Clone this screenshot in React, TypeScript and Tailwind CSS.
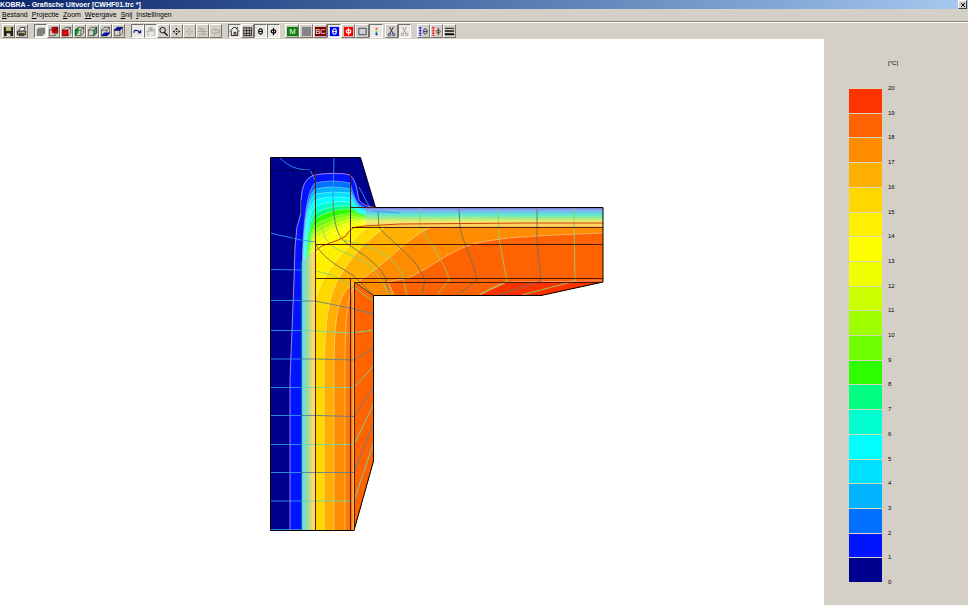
import type { ReactNode } from "react";
import clsx from "clsx";

interface Tool {
  label: string;
  icon: ReactNode;
  pressed?: boolean;
}

const MENU = ["Bestand", "Projectie", "Zoom", "Weergave", "Snij", "Instellingen"];

// warm to cold, one band per degree
const BANDS = [
  "#ff3300", "#ff6200", "#ff8c00", "#ffb000", "#ffd800",
  "#fff000", "#ffff00", "#f0ff00", "#ccff00", "#9dff00",
  "#6eff00", "#2eff00", "#00ff80", "#00ffcf", "#00ffff",
  "#00e0ff", "#00b4ff", "#0070ff", "#0014ff", "#00008f",
];

function Icon({ children }: { children: ReactNode }) {
  return (
    <svg viewBox="0 0 12 12" className="size-[11px] shrink-0" fill="none" stroke="#000" aria-hidden="true">
      {children}
    </svg>
  );
}

type Face = "top" | "front" | "left" | "back" | "bottom" | "rear";

const FACES: Record<Face, string> = {
  top: "M1.5 4.5L4.5 1.5H10.5L7.5 4.5Z",
  front: "M1.5 4.5H7.5V10.5H1.5Z",
  left: "M1.5 4.5L4.5 1.5V7.5L1.5 10.5Z",
  back: "M4.5 1.5H10.5V7.5H4.5Z",
  bottom: "M1.5 10.5L4.5 7.5H10.5L7.5 10.5Z",
  rear: "M7.5 4.5L10.5 1.5V7.5L7.5 10.5Z",
};

function Cube({ face, color }: { face: Face; color: string }) {
  return (
    <Icon>
      <path d="M1.5 4.5L4.5 1.5H10.5V7.5L7.5 10.5H1.5Z" fill="#d4d0c8" stroke="none" />
      <path d={FACES[face]} fill={color} stroke={color} strokeWidth=".8" />
      <path d="M1.5 4.5H7.5V10.5H1.5ZM1.5 4.5L4.5 1.5H10.5V7.5L7.5 10.5M7.5 4.5L10.5 1.5" strokeWidth=".7" strokeOpacity=".8" />
    </Icon>
  );
}

function Theta({ color = "#000", bg }: { color?: string; bg?: string }) {
  return (
    <Icon>
      {bg && <path d="M1 1H11V11H1Z" fill={bg} stroke="none" />}
      <ellipse cx="6" cy="6" rx="2" ry="3" stroke={color} strokeWidth="1.2" />
      <path d="M4 6H8" stroke={color} />
    </Icon>
  );
}

function Phi({ color = "#000", bg }: { color?: string; bg?: string }) {
  return (
    <Icon>
      {bg && <path d="M1 1H11V11H1Z" fill={bg} stroke="none" />}
      <ellipse cx="6" cy="6" rx="2.5" ry="1.8" stroke={color} strokeWidth="1.2" />
      <path d="M6 2V10" stroke={color} strokeWidth="1.2" />
    </Icon>
  );
}

function Letters({ text, bg }: { text: string; bg: string }) {
  return (
    <Icon>
      <path d="M0 1H12V11H0Z" fill={bg} stroke="none" />
      <text x="6" y="9" textAnchor="middle" fill="#fff" stroke="none" className="text-[8px]">
        {text}
      </text>
    </Icon>
  );
}

function Scissors({ color }: { color: string }) {
  return (
    <Icon>
      <path d="M4 1L7.5 8M8 1L4.5 8" stroke={color} />
      <circle cx="3.7" cy="9.3" r="1.3" stroke={color} />
      <circle cx="8.3" cy="9.3" r="1.3" stroke={color} />
    </Icon>
  );
}

function Arrows({ color }: { color: string }) {
  return (
    <Icon>
      <path d="M6 2L7.5 4H4.5ZM6 10L7.5 8H4.5ZM2 6L4 4.5V7.5ZM10 6L8 4.5V7.5Z" fill={color} stroke="none" />
      <path d="M5.5 6H6.5" stroke={color} />
    </Icon>
  );
}

const GREY = "#a5a29c";

const GROUPS: { wide?: boolean; tools: Tool[] }[] = [
  {
    tools: [
      {
        label: "Opslaan",
        icon: (
          <Icon>
            <path d="M1 1H11V11H1Z" fill="#222210" stroke="none" />
            <path d="M3 1H9V5.5H3Z" fill="#b8b870" stroke="none" />
            <path d="M4 8H8V11H4Z" fill="#ddd" stroke="none" />
          </Icon>
        ),
      },
      {
        label: "Afdrukken",
        icon: (
          <Icon>
            <path d="M3.5 5L5 1.5H10L8.5 5" fill="#fff" strokeWidth=".8" />
            <path d="M1.5 5.5H10.5V9.5H1.5Z" fill="#999" strokeWidth=".8" />
            <path d="M3 8.5H9M3 10.5H9" strokeWidth=".8" />
            <path d="M7 7H9" stroke="#dd0" />
          </Icon>
        ),
      },
    ],
  },
  {
    tools: [
      {
        label: "Vol",
        pressed: true,
        icon: (
          <Icon>
            <path d="M2 4L4 2H11V8L8 11H2Z" fill="#808080" stroke="none" />
          </Icon>
        ),
      },
      { label: "Achter", icon: <Cube face="back" color="#e00000" /> },
      { label: "Voor", icon: <Cube face="front" color="#ff0000" /> },
      { label: "Links", icon: <Cube face="left" color="#00b030" /> },
      { label: "Rechts", icon: <Cube face="rear" color="#30b060" /> },
      { label: "Onder", icon: <Cube face="bottom" color="#0010c0" /> },
      { label: "Boven", icon: <Cube face="top" color="#0010c0" /> },
    ],
  },
  {
    tools: [
      {
        label: "Roteren",
        pressed: true,
        icon: (
          <Icon>
            <path d="M2.5 7.5C1 4 6 4 8 6.5" stroke="#001080" strokeWidth="1.2" />
            <path d="M10 4V8H6Z" fill="#001080" stroke="none" />
          </Icon>
        ),
      },
      {
        label: "Verschuiven",
        pressed: true,
        icon: (
          <Icon>
            <path d="M3.5 11V8L1.5 6L3 5.5L4 6.5V2.5H5.5V6V1.5H7V6V2.5H8.5V6L9 4H10.5V8L9 11" stroke={GREY} strokeWidth=".8" />
          </Icon>
        ),
      },
      {
        label: "Vergroten",
        icon: (
          <Icon>
            <circle cx="5" cy="4.5" r="3" />
            <path d="M7 7L10.5 10.5" strokeWidth="1.5" />
          </Icon>
        ),
      },
      { label: "Passend", icon: <Arrows color="#000" /> },
      { label: "Centreren", icon: <Arrows color={GREY} /> },
      {
        label: "Venster",
        icon: (
          <Icon>
            <path d="M1 3H7M1 6H11M2 9H10M3 2L9 10M9 3L6 6" stroke={GREY} />
          </Icon>
        ),
      },
      {
        label: "Vorige",
        icon: (
          <Icon>
            <path d="M1.5 6L5 2.5V4.5H10.5V7.5H5V9.5Z" stroke={GREY} />
          </Icon>
        ),
      },
    ],
  },
  {
    tools: [
      {
        label: "Omtrek",
        pressed: true,
        icon: (
          <Icon>
            <path d="M1 6L5 1.5H7L11 6M2.5 5.5V10.5H9.5V5.5M5.5 10V7H7.5V10M9 3V1" strokeWidth=".9" />
          </Icon>
        ),
      },
      {
        label: "Raster",
        icon: (
          <Icon>
            <path d="M1.5 2H10.5M1.5 5H10.5M1.5 8H10.5M1.5 10.5H10.5M2 1.5V11M5 1.5V11M8 1.5V11M10.5 1.5V11" strokeWidth=".8" />
          </Icon>
        ),
      },
      { label: "Isothermen", pressed: true, icon: <Theta /> },
      { label: "Fluxlijnen", pressed: true, icon: <Phi /> },
    ],
  },
  {
    wide: true,
    tools: [
      { label: "Materialen", icon: <Letters text="M" bg="#108010" /> },
      {
        label: "Grijs",
        icon: (
          <Icon>
            <path d="M1 1H11V11H1Z" fill="#858585" stroke="none" />
          </Icon>
        ),
      },
      { label: "Randvoorwaarden", icon: <Letters text="BC" bg="#800000" /> },
      { label: "Temperatuurkleuren", pressed: true, icon: <Theta color="#fff" bg="#0000ff" /> },
      { label: "Fluxkleuren", icon: <Phi color="#fff" bg="#ff0000" /> },
      {
        label: "Leeg",
        icon: (
          <Icon>
            <path d="M2 2.5H10V9.5H2Z" stroke="#404070" />
          </Icon>
        ),
      },
      {
        label: "Legende",
        pressed: true,
        icon: (
          <Icon>
            <path d="M6 2V4" stroke="#f33" strokeWidth="2" />
            <path d="M6 4V6" stroke="#fd0" strokeWidth="2" />
            <path d="M6 6V8" stroke="#0c6" strokeWidth="2" />
            <path d="M6 8V10" stroke="#00d" strokeWidth="2" />
          </Icon>
        ),
      },
    ],
  },
  {
    tools: [
      { label: "Snijden", icon: <Scissors color="#222a55" /> },
      { label: "Snede opheffen", pressed: true, icon: <Scissors color="#999" /> },
    ],
  },
  {
    tools: [
      {
        label: "Temperatuurschaal",
        icon: (
          <Icon>
            <path d="M2.5 1V11" stroke="#00f" strokeWidth="2" strokeDasharray="2 1" />
            <ellipse cx="8" cy="6" rx="2" ry="3" stroke="#335" />
            <path d="M6 6H10" stroke="#335" />
          </Icon>
        ),
      },
      {
        label: "Fluxschaal",
        icon: (
          <Icon>
            <path d="M2.5 1V11" stroke="#f00" strokeWidth="2" strokeDasharray="2 1" />
            <ellipse cx="8" cy="6" rx="2" ry="1.7" stroke="#533" />
            <path d="M8 2V10" stroke="#533" />
          </Icon>
        ),
      },
      {
        label: "Lijndikte",
        icon: (
          <Icon>
            <path d="M1 2.5H11" />
            <path d="M1 5.5H11" strokeWidth="1.5" />
            <path d="M1 9H11" strokeWidth="2" />
          </Icon>
        ),
      },
    ],
  },
];

function ToolButton({ tool, wide }: { tool: Tool; wide?: boolean }) {
  return (
    <button
      type="button"
      aria-label={tool.label}
      aria-pressed={tool.pressed}
      className={clsx(
        "flex h-[14px] items-center justify-center overflow-hidden border",
        wide ? "w-[14px]" : "w-[13px]",
        tool.pressed
          ? "border-t-[#707070] border-l-[#707070] border-r-white border-b-white bg-[#ebe9e5]"
          : "border-t-white border-l-white border-r-[#77736d] border-b-[#77736d] bg-[#d4d0c8]"
      )}
    >
      {tool.icon}
    </button>
  );
}

const OUTLINE = "M270.5 157.5H360.5L375.5 207.5H603V282L541 295.5H373.5V461L354 530.5H270.5Z";

// [x in wall, y left of the cap, y middle, y right, y in roof, colour]
const ISOTHERMS: [number, number, number, number, number, string][] = [
  [301.5, 183, 181, 183, 208.5, "#0070ff"],
  [302, 189, 187, 189, 209.5, "#00b4ff"],
  [302.5, 194, 192, 193, 211, "#00e0ff"],
  [303, 200, 197, 198, 212.5, "#00ffff"],
  [304, 206, 202, 202, 214, "#00ffcf"],
  [305, 213, 207, 206, 215.5, "#00ff80"],
  [306, 219, 211, 209, 216.5, "#2eff00"],
  [307, 225, 217, 213, 217.5, "#6eff00"],
  [308, 230, 221, 216, 218.5, "#9dff00"],
  [309, 234, 225, 219, 219.5, "#ccff00"],
  [310.5, 239, 229, 222, 220.5, "#f0ff00"],
  [312, 245, 234, 225, 221.5, "#ffff00"],
  [313.5, 254, 241, 229, 223, "#fff000"],
];

const isotherm = ([x, yl, ym, yr, roof]: (typeof ISOTHERMS)[number]) =>
  `M${x} 532V340C${x} 270 ${x} ${yl + 12} 315 ${yl}Q332 ${2 * ym - (yl + yr) / 2} 350 ${yr}` +
  `C356 ${Math.max(yr, roof - 6)} 358 ${roof} 375 ${roof}H604V532Z`;

const WARM = [
  { d: "M315 532V300C322 275 338 258 350 245S362 228 375 225H604V532Z", fill: "#ffd800" },
  { d: "M324 532V380C325 310 329 292 345 268S370 240 385 227L604 225V532Z", fill: "#ffb000" },
  { d: "M334 532V380C334 325 336 296 351 286C362 280 375 270 390 257S416 234 431 227H604V532Z", fill: "#ff8c00" },
  { d: "M345 532V370C345 320 347 300 353 288V532Z", fill: "#ff7a00" },
  { d: "M354 532V283L374 296V532Z", fill: "#ff6200" },
  { d: "M395 297L388 282L408 278C430 268 446 254 467 246C495 237 530 236 604 233V297Z", fill: "#ff6200" },
  { d: "M475 297L507 282L604 281V297Z", fill: "#ff3300" },
];

const WALL_FLUX = [
  "M301 301H315L350 308L373.5 314",
  "M301 330L350 333L373.5 330",
  "M301 359H315L354 360L373.5 348",
  "M301 387.5H354L373.5 366",
  "M301 415.5H318L354 416.5L373.5 387",
  "M301 444.5H354L373.5 404",
  "M301 472.5H354L373.5 423",
  "M301 501H354L373.5 443",
];

const BLUE_FLUX = [
  "M270 233L301 240L315 242", "M270 269.5L301 270", "M270 300.5H301", "M270 330.5H301",
  "M270 359H301", "M270 387.5H301", "M270 415.5H301", "M270 444.5H301",
  "M270 472.5H301", "M270 501H301", "M270 529.5H301",
  "M280 158C289 167 298 170 310 170L315 180",
  "M334 158L333 200", "M359 187L369 206", "M372 211L400 213",
];

const DARK_FLUX = [
  "M333 200C334 226 338 235 343 240C350 248 375 258 385 277L390 295",
  "M316 245C326 262 346 270 354 276L373 295",
  "M378 212L379 227C385 236 407 252 417 265L425 280L422 295",
  "M459 209L460 227C463 244 474 262 477 280L457 295",
  "M537 209V235C537 252 540 266 541 281L498 295",
];

const GREEN_FLUX = [
  "M320 220L325 238L333 247C350 256 372 260 380 280L391 295",
  "M315 271L332 275L355 288L373 301",
  "M343 240C375 247 398 258 403 278L407 295",
  "M420 208V227C426 236 448 268 449 280L437 295",
  "M498 209L499 238L507 281L480 294",
  "M574 208L575 281L522 295",
];

const ROOF_STOPS = ["#6a68c8", "#8ca4ec", "#60d4e8", "#6cecc0", "#a4ec84", "#ecec70", "#ffd868", "#ffc050"];
const WALL_STOPS = ["#38c8f0", "#66e0e0", "#84dcc0", "#a4dc98", "#ccdc7c", "#f4e070", "#ffd840"];

function HeatPlot() {
  return (
    <svg viewBox="0 39 824 566" className="size-full" fill="none" role="img" aria-label="Temperatuurverdeling">
      <defs>
        <clipPath id="section">
          <path d={OUTLINE} />
        </clipPath>
        <linearGradient id="roof" gradientUnits="userSpaceOnUse" x1="0" x2="0" y1="207" y2="227">
          {ROOF_STOPS.map((color, i) => (
            <stop key={color} offset={i / (ROOF_STOPS.length - 1)} stopColor={color} />
          ))}
        </linearGradient>
        <linearGradient id="wall" gradientUnits="userSpaceOnUse" x1="301" x2="315" y1="0" y2="0">
          {WALL_STOPS.map((color, i) => (
            <stop key={color} offset={i / (WALL_STOPS.length - 1)} stopColor={color} />
          ))}
        </linearGradient>
      </defs>
      <g clipPath="url(#section)">
        <path d={OUTLINE} fill="#00008f" />
        <g stroke="#fff" strokeOpacity=".45" strokeWidth=".8">
          <path
            d="M290 532V380L294 280L295 247L297 227L301 213V200Q302 180 312 176Q316 174 330 173.5T350 175Q356 180 358 195Q358 206 375 207.5H604V532Z"
            fill="#0014ff"
            stroke="#e0b0ff"
            strokeOpacity=".9"
          />
          {ISOTHERMS.map((row) => (
            <path key={row[5]} d={isotherm(row)} fill={row[5]} />
          ))}
        </g>
        {/* isotherms crowd together here, so the bands blend */}
        <path d="M301 532V262L315 250V532Z" fill="url(#wall)" />
        <path d="M366 207H604V228H366Z" fill="url(#roof)" />
        <g stroke="#fff" strokeOpacity=".5" strokeWidth=".8">
          {WARM.map((zone) => (
            <path key={zone.d} d={zone.d} fill={zone.fill} />
          ))}
        </g>
        <path d="M386 218H604V228H386Z" fill="url(#roof)" />
        <g stroke="#3098e8" strokeWidth=".9">
          {BLUE_FLUX.map((d) => (
            <path key={d} d={d} />
          ))}
        </g>
        {WALL_FLUX.map((d, i) => (
          <path key={d} d={d} stroke={i % 2 ? "#70d8a0" : "#608090"} strokeWidth=".9" />
        ))}
        <g stroke="#6b7068" strokeWidth=".9">
          {DARK_FLUX.map((d) => (
            <path key={d} d={d} />
          ))}
        </g>
        <g stroke="#90d070" strokeWidth=".9">
          {GREEN_FLUX.map((d) => (
            <path key={d} d={d} />
          ))}
        </g>
        <path d="M315 251Q320 246 330 243T346 236Q350 228 356 227T400 224L527 223H603" stroke="#d04000" />
        <path d="M270 170.5H315M293.5 170V255" stroke="#000050" strokeWidth=".8" />
        <path d="M301.5 200V531" stroke="#101060" strokeOpacity=".6" />
        <path
          d="M350.5 173V244.5M350.5 278V531M354.5 531V282.5H603M354.5 282.5L373.5 295.5M350 207.5H603M352 227.5H603M315 244.5H603M315 278.5H603"
          stroke="#401000"
          strokeWidth=".9"
        />
        <path d="M315.5 170V531" stroke="#601800" />
      </g>
      <path d={OUTLINE} stroke="#000" />
    </svg>
  );
}

function Legend() {
  return (
    <aside className="flex w-36 shrink-0 flex-col bg-[#d4d0c8] pt-5 pb-[23px] pl-[25px] text-[6px] leading-[8px]">
      <div className="mb-[21px] pl-[39px]">[°C]</div>
      <ol className="flex flex-1 flex-col">
        {BANDS.map((color, i) => (
          <li key={color} className="flex flex-1 gap-1.5">
            <span className="w-[33px] border-t border-[#d8d8b8]" style={{ backgroundColor: color }} />
            <span className="-mt-1 flex flex-col justify-between">
              <span>{20 - i}</span>
              {i === BANDS.length - 1 && <span className="-mb-1">0</span>}
            </span>
          </li>
        ))}
      </ol>
    </aside>
  );
}

export default function App() {
  return (
    <div className="flex h-screen flex-col overflow-hidden bg-[#d4d0c8] font-['Liberation_Sans',sans-serif] text-black">
      <header className="flex h-[9px] shrink-0 items-center justify-between bg-linear-to-r from-[#0a246a] to-[#a6caf0]">
        <h1 className="text-[7px] leading-[9px] font-bold whitespace-nowrap text-white">
          KOBRA - Grafische Uitvoer [CWHF01.trc *]
        </h1>
        <button
          type="button"
          aria-label="Sluiten"
          className="mr-px flex size-[9px] items-center justify-center border border-t-white border-l-white border-r-[#404040] border-b-[#404040] bg-[#d4d0c8]"
        >
          <svg viewBox="0 0 6 6" className="size-[6px]" stroke="#000" aria-hidden="true">
            <path d="M1 1L5 5M5 1L1 5" />
          </svg>
        </button>
      </header>

      <nav className="flex h-[13px] shrink-0 items-center gap-1 border-b border-[#8a867f] pl-0.5 text-[7px] leading-[12px]">
        {MENU.map((item) => (
          <button key={item} type="button">
            <span className="underline">{item[0]}</span>
            {item.slice(1)}
          </button>
        ))}
      </nav>

      <div className="flex h-[17px] shrink-0 items-start gap-[6px] border-t border-white pt-px pl-0.5" role="toolbar">
        {GROUPS.map((group, i) => (
          <div key={i} className={clsx("flex", group.wide && "-mr-1 -ml-px")}>
            {group.tools.map((tool) => (
              <ToolButton key={tool.label} tool={tool} wide={group.wide} />
            ))}
          </div>
        ))}
      </div>

      <div className="flex min-h-0 flex-1">
        <main className="min-w-0 flex-1 bg-white">
          <HeatPlot />
        </main>
        <Legend />
      </div>
    </div>
  );
}
